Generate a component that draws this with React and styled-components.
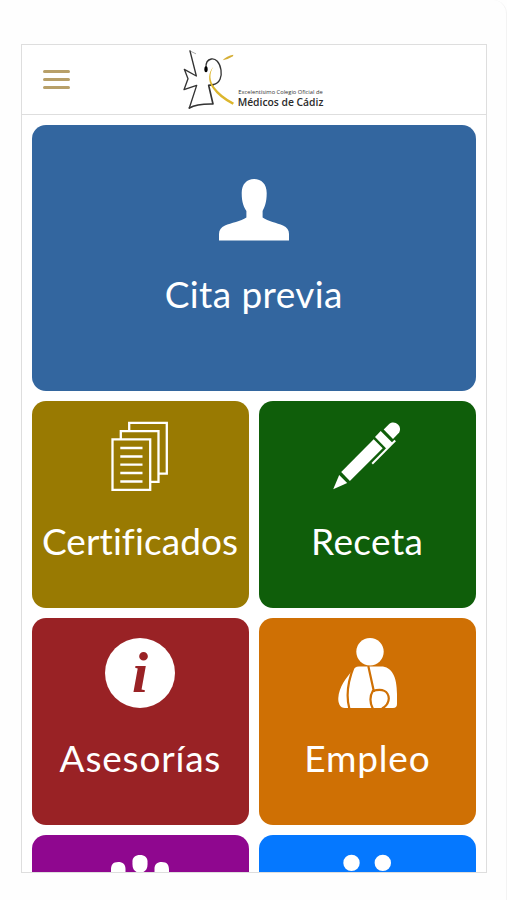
import styled, { createGlobalStyle } from 'styled-components'

const GlobalStyle = createGlobalStyle`
    * {
        box-sizing: border-box;
    }
    body {
        margin: 0;
        background-color: #fefefe;
        overflow: hidden;
    }
`
const Page = styled.div`
    height: 900px;
    padding: 44px 20px 28px 21px;
    border-right: 1px solid #f3f3f3;
    border-radius: 0 14px 0 0;
    font-family: Lato, "Open Sans", sans-serif;
`
const Phone = styled.main`
    width: 466px;
    height: 828.5px;
    border: 1px solid #dedede;
    background-color: white;
    overflow: hidden;
`
const Header = styled.header`
    display: flex;
    align-items: flex-start;
    height: 70px;
    padding: 1px 0 0 21px;
    border-bottom: 1px solid #dedede;
`
const MenuButton = styled.button`
    display: flex;
    flex-direction: column;
    gap: 5px;
    width: 27px;
    margin: 24px 110px 0 0;
    padding: 0;
    border: none;
    background: none;
    cursor: pointer;
`
const Bar = styled.span`
    height: 3px;
    border-radius: 2px;
    background-color: #b8a069;
`
const LogoSvg = styled.svg`
    width: 145px;
    height: 66px;
    overflow: visible;
    font-family: "Open Sans", "Noto Sans", sans-serif;
`
const Grid = styled.section`
    display: grid;
    grid-template-columns: 217px 217px;
    grid-template-rows: 266px;
    grid-auto-rows: 206.7px;
    gap: 10px;
    padding: 10.3px 0 0 9.5px;
`
const Card = styled.a`
    display: flex;
    flex-direction: column;
    align-items: center;
    grid-column: ${({ $wide }) => ($wide ? '1 / -1' : 'auto')};
    padding-top: ${({ $wide }) => ($wide ? '48.7px' : '19.7px')};
    border-radius: 14px;
    background-color: ${({ $color }) => $color};
    color: white;
`
const Icon = styled.svg`
    flex: none;
    width: 70px;
    height: 70px;
    fill: white;
`
const Label = styled.span`
    margin-top: 25px;
    margin-right: -${({ $spacing }) => $spacing}px;
    font-size: 37px;
    line-height: 50px;
    letter-spacing: ${({ $spacing }) => $spacing}px;
    white-space: nowrap;
`

const Logo = () => (
    <LogoSvg viewBox="0 0 435 198">
        <g fill="none" stroke="#333" strokeLinecap="round" strokeLinejoin="round">
            <path d="M47 23L30 15" stroke="#aaa" strokeWidth="3" />
            <path d="M30 15L49 90L13 70L24 98L12 131L50 118L28 186" strokeWidth="4" />
            <path d="M28 186Q50 173 99 174L86 118L100 116" strokeWidth="5" />
            <path d="M100 116C120 112 126 92 123 72C119 48 107 37 94 39C83 41 77 52 78 66" strokeWidth="4" />
        </g>
        <ellipse cx="78" cy="70" rx="5" ry="9" />
        <path d="M128 43Q140 29 160 26L159 31Q145 40 128 43Z" fill="#d5ae35" />
        <path d="M100 62C87 83 89 105 103 123Q123 150 162 170L158 176Q117 155 99 128C81 103 86 78 100 62Z" fill="#dcb62d" />
        <text x="175" y="145" fontSize="18" textLength="253" lengthAdjust="spacingAndGlyphs" fill="#333">Excelentísimo Colegio Oficial de</text>
        <text x="173" y="179" fontSize="30" fontWeight="600" textLength="257" lengthAdjust="spacingAndGlyphs" fill="#2b2b2b">Médicos de Cádiz</text>
    </LogoSvg>
)

const PersonIcon = () => (
    <Icon viewBox="0 0 70 70">
        <path d="M35 5C42.5 5 47.7 10 47.7 19C47.7 29 45.5 33 43.6 37V43.5C49 47 58 49 64 51.5C68 53.5 70 56 70 60V66.5H0V60C0 56 2 53.5 6 51.5C12 49 22 47 27.4 43.5V37C25 33 22.7 29 22.7 19C22.7 10 28 5 35 5Z" />
    </Icon>
)

const DocumentsIcon = () => (
    <Icon viewBox="0 0 70 70">
        <g fill="none" stroke="white" strokeWidth="2.3">
            <path d="M24.2 9.5V1.8H61.8V52.7H53.5" />
            <path d="M15.8 18V10.2H53.5V60.8H45.2" />
            <path d="M7.5 18.3H45.2V69H7.5Z" />
            <path d="M15.3 27H37.5M15.3 35.5H37.5M15.3 43.7H37.5M15.3 52H37.5M15.3 60.5H37.5" />
        </g>
    </Icon>
)

const PenIcon = () => (
    <Icon viewBox="-0.7 0 70 70">
        <path d="M0.5 68.3L6.5 54L14.5 62Z" />
        <path d="M8.5 51L41 18.3L50 27.3L17.2 60Z" />
        <path d="M42.3 16L48 10L60 22L53.5 27.5Z" />
        <path d="M51 8.5L56.5 3C62-1.5 70 5 66.5 11.5L60.3 18Z" />
        <path d="M62.5 19.5L39.5 42.7" fill="none" stroke="white" strokeWidth="2" />
    </Icon>
)

const InfoIcon = () => (
    <Icon viewBox="0 0 70 70">
        <circle cx="35" cy="35" r="35" />
        <text x="35" y="54" textAnchor="middle" fontFamily="Liberation Serif, serif" fontSize="58" fontStyle="italic" fontWeight="700" fill="#992225">i</text>
    </Icon>
)

const PatientIcon = () => (
    <Icon viewBox="0 0 70 70">
        <circle cx="38" cy="13.8" r="13.7" />
        <path d="M27 28.5H49C60 28.5 65 39 65 56V66Q65 70 61 70H13C8 70 6 65 6.3 60C7 49 14 40 20 33Q22.5 28.5 27 28.5Z" />
        <g fill="none" stroke="#cf7004" strokeWidth="2.2">
            <path d="M22 28C16 43 14 59 17.5 71M36.3 28L42 54" />
            <path d="M40.5 53Q56 49 56.8 60.5Q56.5 67 50 70.5M41 52.5Q36 61 40.8 70.5" />
        </g>
    </Icon>
)

const GroupIcon = () => (
    <Icon viewBox="0 -0.6 70 70">
        <path d="M35 .3C40 .3 43 3 42.5 8C43 15 40 18 35 18C30 18 27 15 27.5 8C27 3 30 .3 35 .3Z" />
        <path d="M13.3 7.3C18 7.3 20.7 10 20.5 15V22H6V15C6 10 8 7.3 13.3 7.3Z" />
        <path d="M56.7 7.3C62 7.3 64 10 64 15V22H49.5V15C49.3 10 52 7.3 56.7 7.3Z" />
    </Icon>
)

const PairIcon = () => (
    <Icon viewBox="0 -0.6 70 70">
        <circle cx="19.5" cy="8.3" r="8.2" />
        <circle cx="50.8" cy="8.3" r="8.2" />
    </Icon>
)

const items = [
    { id: 1, title: 'Cita previa', color: '#33669f', icon: PersonIcon, spacing: 0.4, wide: true },
    { id: 2, title: 'Certificados', color: '#997a02', icon: DocumentsIcon, spacing: 0.1 },
    { id: 3, title: 'Receta', color: '#0f5e0a', icon: PenIcon, spacing: 0.4 },
    { id: 4, title: 'Asesorías', color: '#992225', icon: InfoIcon, spacing: 0.8 },
    { id: 5, title: 'Empleo', color: '#cf7004', icon: PatientIcon, spacing: 0.8 },
    { id: 6, color: '#8f078f', icon: GroupIcon },
    { id: 7, color: '#0578ff', icon: PairIcon },
]

const App = () => {
    return (
        <Page>
            <GlobalStyle />
            <Phone>
                <Header>
                    <MenuButton>
                        <Bar />
                        <Bar />
                        <Bar />
                    </MenuButton>
                    <Logo />
                </Header>
                <Grid>
                    {items.map(({ id, title, color, icon: ItemIcon, spacing, wide }) => (
                        <Card key={id} $color={color} $wide={wide}>
                            <ItemIcon />
                            {title && <Label $spacing={spacing}>{title}</Label>}
                        </Card>
                    ))}
                </Grid>
            </Phone>
        </Page>
    )
}

export default App
